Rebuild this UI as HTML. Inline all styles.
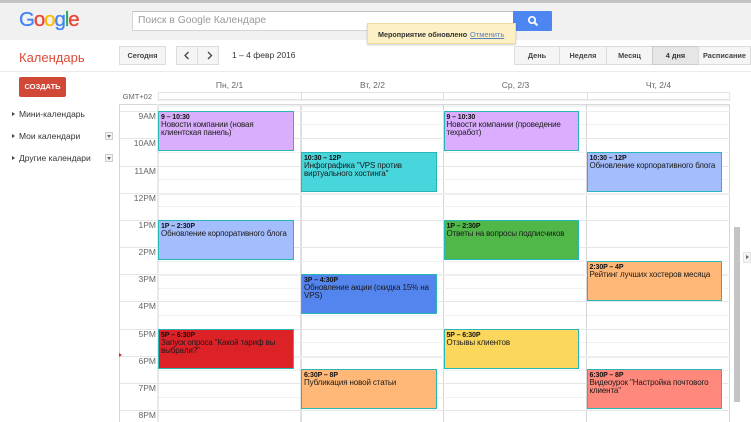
<!DOCTYPE html>
<html><head><meta charset="utf-8">
<style>
html,body{margin:0;padding:0;width:751px;height:422px;overflow:hidden;background:#fff;font-family:"Liberation Sans","Noto Sans CJK SC",sans-serif;color:#222}
div,span,a{position:absolute;white-space:nowrap;box-sizing:border-box}
#w{left:0;top:0;width:751px;height:422px;overflow:hidden;filter:blur(.3px)}
.btn{background:#f5f5f5;border:1px solid #dcdcdc;font-size:7.3px;font-weight:bold;color:#444;text-align:center;top:46px;height:19px;line-height:17px}
.side{font-size:8.5px;color:#333;left:19px;height:12px;line-height:12px}
.tri{width:0;height:0;border-left:3px solid #444;border-top:2.5px solid transparent;border-bottom:2.5px solid transparent;left:12px}
.dd{left:105px;width:8px;height:8px;border:1px solid #ccc;background:#f4f4f4}
.dd:after{content:"";position:absolute;left:1px;top:2px;border-top:3px solid #666;border-left:2px solid transparent;border-right:2px solid transparent}
.dh{top:80px;font-size:8.5px;color:#666;text-align:center;width:143px;height:11px;line-height:11px}
.h{left:158px;width:572px;height:1px;background:#e6e6e6}
.hh{left:158px;width:572px;height:0;border-top:1px dotted #e6e6e6}
.hs{left:120px;width:38px;height:1px;background:#e6e6e6}
.t{left:120px;width:36px;text-align:right;font-size:8.5px;color:#666;height:11px;line-height:11px}
.v{top:104px;height:318px;width:1px;background:#d6d6d6}
.e{width:135.5px;height:40px;border:1px solid #26b8b8;padding:0 0 0 2px;color:#1a1a1a;white-space:normal;font-size:8px;letter-spacing:-.13px;line-height:8.7px}
.e b{display:block;font-size:7px;letter-spacing:-.1px;line-height:7px;margin-top:1.5px;color:#111;white-space:nowrap}
</style></head>
<body>
<div id="w">
<div style="left:0;top:0;width:751px;height:3px;background:#c4c4c4"></div>
<div style="left:0;top:3px;width:751px;height:37px;background:#f1f1f1"></div>

<div style="left:19px;top:6px;height:28px;line-height:28px;font-size:20.5px;letter-spacing:-1.1px;-webkit-text-stroke:.3px;font-family:'Liberation Sans',sans-serif"><span style="position:static;color:#4285f4">G</span><span style="position:static;color:#ea4335">o</span><span style="position:static;color:#fbbc05">o</span><span style="position:static;color:#4285f4">g</span><span style="position:static;color:#34a853">l</span><span style="position:static;color:#ea4335">e</span></div>

<div style="left:132px;top:11px;width:382px;height:20px;background:#fff;border:1px solid #d4d4d4;border-top-color:#c0c0c0"></div>
<div style="left:138px;top:14px;font-size:10.3px;line-height:13px;color:#9a9a9a">Поиск в Google Календаре</div>
<div style="left:513px;top:11px;width:39px;height:20px;background:#4d86f0;border-radius:1px"></div>
<svg style="position:absolute;left:526px;top:14px" width="14" height="14" viewBox="0 0 14 14"><circle cx="6" cy="6" r="3.2" fill="none" stroke="#fff" stroke-width="1.7"/><path d="M8.5 8.5L11.5 11.5" stroke="#fff" stroke-width="2"/></svg>
<div style="left:367px;top:23px;width:149px;height:21px;background:#fcf0c4;border:1px solid #f0dc9c;box-shadow:0 1px 2px rgba(0,0,0,.2)"></div>
<div style="left:378px;top:29px;font-size:7.2px;font-weight:bold;color:#333;line-height:11px">Мероприятие обновлено</div>
<div style="left:470px;top:29px;font-size:7.5px;color:#5a7fc0;text-decoration:underline;line-height:11px">Отменить</div>

<div style="left:19px;top:49px;font-size:13px;line-height:17px;color:#dd4b39">Календарь</div>
<div class="btn" style="left:119px;width:47px">Сегодня</div>
<div class="btn" style="left:176px;width:22px"></div>
<div class="btn" style="left:197px;width:22px"></div>
<svg style="position:absolute;left:176px;top:46px" width="44" height="19" viewBox="0 0 44 19"><path d="M12.5 6L9 9.5L12.5 13M32 6L35.5 9.5L32 13" fill="none" stroke="#444" stroke-width="1.3"/></svg>
<div style="left:232px;top:50px;font-size:8.5px;line-height:11px;color:#333">1 – 4 февр 2016</div>

<div class="btn" style="left:514px;width:46px;">День</div>
<div class="btn" style="left:559px;width:48px;">Неделя</div>
<div class="btn" style="left:606px;width:47px;">Месяц</div>
<div class="btn" style="left:652px;width:47px;background:#e6e6e6;border-color:#ccc;color:#333">4 дня</div>
<div class="btn" style="left:698px;width:53px;">Расписание</div>
<div style="left:0;top:71px;width:751px;height:1px;background:#ebebeb"></div>

<div style="left:19px;top:77px;width:47px;height:20px;background:#d14836;border-radius:2px;color:#fff;font-size:7.5px;font-weight:bold;text-align:center;line-height:20px">СОЗДАТЬ</div>

<div class="tri" style="top:111.5px"></div><div class="side" style="top:108px">Мини-календарь</div>
<div class="tri" style="top:133.5px"></div><div class="side" style="top:130px">Мои календари</div><div class="dd" style="top:132px"></div>
<div class="tri" style="top:155.5px"></div><div class="side" style="top:152px">Другие календари</div><div class="dd" style="top:154px"></div>

<div class="dh" style="left:158px">Пн, 2/1</div>
<div class="dh" style="left:301px">Вт, 2/2</div>
<div class="dh" style="left:444px">Ср, 2/3</div>
<div class="dh" style="left:587px">Чт, 2/4</div>
<div style="left:120px;top:91px;width:32px;text-align:right;font-size:7.5px;color:#666;line-height:11px">GMT+02</div>
<div style="left:158px;top:92px;width:572px;height:8px;border:1px solid #e3e3e3;box-shadow:0 1px 1px #eee"></div>
<div style="left:301px;top:92px;width:1px;height:8px;background:#ddd"></div>
<div style="left:443px;top:92px;width:1px;height:8px;background:#ddd"></div>
<div style="left:587px;top:92px;width:1px;height:8px;background:#ddd"></div>

<div style="left:119px;top:104px;width:611px;height:1px;background:#d8d8d8"></div>
<div style="left:158px;top:105px;width:572px;height:2px;background:#f2f2f2"></div>
<div class="v" style="left:119px"></div>
<div class="v" style="left:157px;width:2px;background:#e8e8e8"></div>
<div class="v" style="left:300px;width:2px;background:#e0e0e0"></div>
<div class="v" style="left:443px"></div>
<div class="v" style="left:586px"></div>
<div class="v" style="left:729px"></div>

<div class="h" style="top:111px;background:#eee"></div><div class="h" style="top:138px"></div><div class="h" style="top:166px"></div><div class="h" style="top:193px;height:2px;background:#eee"></div><div class="h" style="top:220px"></div><div class="h" style="top:247px"></div><div class="h" style="top:274px;height:2px;background:#eee"></div><div class="h" style="top:301px"></div><div class="h" style="top:329px"></div><div class="h" style="top:356px;height:2px;background:#eee"></div><div class="h" style="top:383px"></div><div class="h" style="top:410px"></div>
<div class="hh" style="top:124px"></div><div class="hh" style="top:152px"></div><div class="hh" style="top:179px"></div><div class="hh" style="top:206px"></div><div class="hh" style="top:261px"></div><div class="hh" style="top:288px"></div><div class="hh" style="top:315px"></div><div class="hh" style="top:342px"></div><div class="hh" style="top:370px"></div><div class="hh" style="top:397px"></div>
<div class="hs" style="top:111px"></div><div class="hs" style="top:138px"></div><div class="hs" style="top:166px"></div><div class="hs" style="top:193px"></div><div class="hs" style="top:220px"></div><div class="hs" style="top:247px"></div><div class="hs" style="top:274px"></div><div class="hs" style="top:301px"></div><div class="hs" style="top:329px"></div><div class="hs" style="top:356px"></div><div class="hs" style="top:383px"></div><div class="hs" style="top:410px"></div>

<div class="t" style="top:111px">9AM</div>
<div class="t" style="top:138px">10AM</div>
<div class="t" style="top:166px">11AM</div>
<div class="t" style="top:193px">12PM</div>
<div class="t" style="top:220px">1PM</div>
<div class="t" style="top:247px">2PM</div>
<div class="t" style="top:274px">3PM</div>
<div class="t" style="top:301px">4PM</div>
<div class="t" style="top:329px">5PM</div>
<div class="t" style="top:356px">6PM</div>
<div class="t" style="top:383px">7PM</div>
<div class="t" style="top:410px">8PM</div>

<div style="left:119px;top:353px;width:0;height:0;border-left:3px solid #c33;border-top:2px solid transparent;border-bottom:2px solid transparent"></div>

<div class="e" style="left:158px;top:111px;background:#d9aefb"><b>9 – 10:30</b>Новости компании (новая клиентская панель)</div>
<div class="e" style="left:158px;top:220px;background:#a4bdfc"><b>1P – 2:30P</b>Обновление корпоративного блога</div>
<div class="e" style="left:158px;top:329px;background:#dc2127"><b>5P – 6:30P</b>Запуск опроса "Какой тариф вы выбрали?"</div>

<div class="e" style="left:301px;top:152px;background:#46d6db"><b>10:30 – 12P</b>Инфографика "VPS против виртуального хостинга"</div>
<div class="e" style="left:301px;top:274px;background:#5484ed"><b>3P – 4:30P</b>Обновление акции (скидка 15% на VPS)</div>
<div class="e" style="left:301px;top:369px;background:#ffb878"><b>6:30P – 8P</b>Публикация новой статьи</div>

<div class="e" style="left:443.5px;top:111px;background:#dbadff"><b>9 – 10:30</b>Новости компании (проведение техработ)</div>
<div class="e" style="left:443.5px;top:220px;background:#51b749"><b>1P – 2:30P</b>Ответы на вопросы подписчиков</div>
<div class="e" style="left:443.5px;top:329px;background:#fbd75b"><b>5P – 6:30P</b>Отзывы клиентов</div>

<div class="e" style="left:586.5px;top:152px;background:#a4bdfc"><b>10:30 – 12P</b>Обновление корпоративного блога</div>
<div class="e" style="left:586.5px;top:261px;background:#ffb878"><b>2:30P – 4P</b>Рейтинг лучших хостеров месяца</div>
<div class="e" style="left:586.5px;top:369px;background:#ff887c"><b>6:30P – 8P</b>Видеоурок "Настройка почтового клиента"</div>

<div style="left:734px;top:227px;width:6px;height:175px;background:#c4c4c4"></div>
<div style="left:743px;top:252px;width:8px;height:11px;background:#f4f4f4;border:1px solid #e4e4e4"></div>
<div style="left:746px;top:255px;width:0;height:0;border-left:3px solid #666;border-top:2.5px solid transparent;border-bottom:2.5px solid transparent"></div>
</div>
</body></html>
